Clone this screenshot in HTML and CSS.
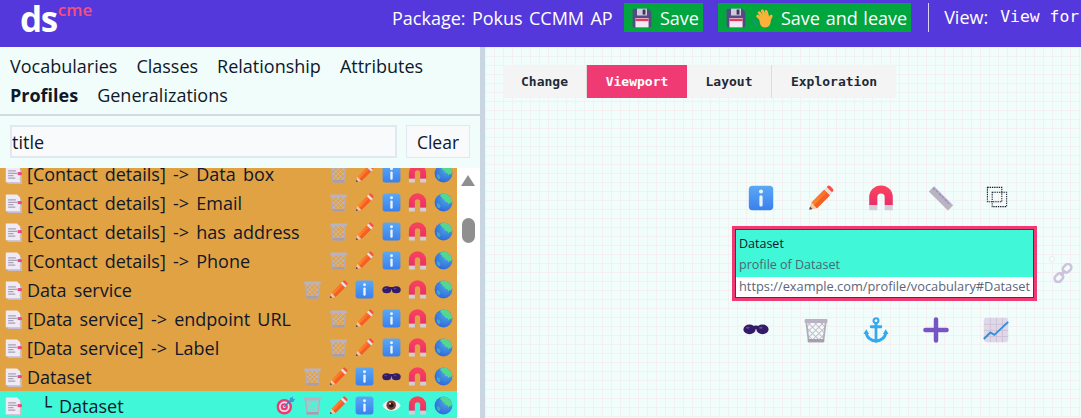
FILE: index.html
```html
<!DOCTYPE html>
<html lang="en">
<head>
<meta charset="utf-8">
<title>Dataspecer CME</title>
<link rel="stylesheet" href="styles.css">
</head>
<body>
<svg class="sprite" aria-hidden="true">
  <defs>
    <linearGradient id="gBlue" x1="0" y1="0" x2="0" y2="1"><stop offset="0" stop-color="#5aa8f5"/><stop offset="1" stop-color="#3a80ee"/></linearGradient>
    <linearGradient id="gMag" x1="0" y1="0" x2="0" y2="1"><stop offset="0" stop-color="#f8405f"/><stop offset="1" stop-color="#ea2f6c"/></linearGradient>
    <radialGradient id="gGlobe" cx=".65" cy=".3" r=".8"><stop offset="0" stop-color="#4aa8e8"/><stop offset="1" stop-color="#2f62d8"/></radialGradient>
    <linearGradient id="gPen" x1="0" y1="1" x2="1" y2="0"><stop offset="0" stop-color="#ff8a2a"/><stop offset="1" stop-color="#f96a2c"/></linearGradient>
    <pattern id="mesh" width="5.500" height="5.500" patternUnits="userSpaceOnUse" patternTransform="rotate(45)">
      <path d="M0 0h5.500M0 0v5.500" stroke="#c2bbca" stroke-width="2.400"/>
    </pattern>

    <symbol id="i-doc" viewBox="0 0 28 32">
      <path d="M4 4h18l6 6v22H4z" fill="#c4bcd2"/>
      <path d="M1 1h19l5 5v23H1z" fill="#efeaf5"/>
      <path d="M5 10h13M5 14h15M5 18h9M5 22h12" stroke="#a8a2b4" stroke-width="2.200"/>
      <rect x="21" y="12" width="7" height="5" fill="#f0447e"/>
      <rect x="24" y="22" width="4" height="3" fill="#f4c25a" opacity=".7"/>
    </symbol>

    <symbol id="i-trash" viewBox="0 0 32 32">
      <path d="M4 6l3 24h18l3-24z" fill="url(#mesh)"/>
      <path d="M4 6l3 24h18l3-24" fill="none" stroke="#b4acbc" stroke-width="2.200"/>
      <rect x="2" y="2.500" width="28" height="5" rx="1.400" fill="#b9b2c2"/>
      <rect x="6" y="27" width="20" height="4" rx="1" fill="#a69eb0"/>
    </symbol>

    <symbol id="i-pencil" viewBox="0 0 32 32">
      <path d="M1.500 30.500l2.500-9 7 7z" fill="#f2c9a0"/>
      <path d="M1.500 30.500l1-4 3 3z" fill="#533566"/>
      <path d="M4 21.500L20 5.500l7 7-16 16z" fill="url(#gPen)"/>
      <path d="M7.500 25L23.500 9l3.500 3.500-16 16z" fill="#f55f25"/>
      <path d="M20 5.500l3-3 7 7-3 3z" fill="#e4dfe8"/>
      <path d="M23 2.500l1-1c1-1 2.500-1 3.500 0l3 3c1 1 1 2.500 0 3.500l-1 1z" fill="#f8503c"/>
    </symbol>

    <symbol id="i-info" viewBox="0 0 32 32">
      <rect x="1" y="1" width="30" height="30" rx="4.500" fill="url(#gBlue)"/>
      <circle cx="16" cy="8" r="2.500" fill="#eaf3ff"/>
      <rect x="14" y="12.500" width="4" height="14" rx="2" fill="#eaf3ff"/>
    </symbol>

    <symbol id="i-magnet" viewBox="0 0 32 32">
      <path d="M6.500 25V15a9.500 9.500 0 0 1 19 0v10" fill="none" stroke="url(#gMag)" stroke-width="10"/>
      <path d="M1.500 25h10v6h-10zM20.500 25h10v6h-10z" fill="#d3cdd9"/>
    </symbol>

    <symbol id="i-globe" viewBox="0 0 32 32">
      <circle cx="16" cy="16" r="15" fill="url(#gGlobe)"/>
      <path d="M11 2.500c3-1.500 9-1.500 12 .5 4 2.500 6.500 5.500 7.500 9.500l-1.500 5-3-1-1.500 3-2-4-4-1-1-3.500-3-.5-1-3-3-2z" fill="#52d890"/>
      <path d="M5 17l4 1.500 2 3-1 3.500-2.500 .5C5 23 4 20 5 17z" fill="#3fa8c8"/>
    </symbol>

    <symbol id="i-glasses" viewBox="0 0 32 32">
      <path d="M12 12.500c2.500-1 5.500-1 8 0v3.500h-8z" fill="#321b67"/>
      <ellipse cx="8" cy="16.500" rx="7.500" ry="6" fill="#321b67"/>
      <ellipse cx="24" cy="16.500" rx="7.500" ry="6" fill="#321b67"/>
      <ellipse cx="6" cy="14.500" rx="2.300" ry="1.200" fill="#6a4ba0"/>
      <ellipse cx="22" cy="14.500" rx="2.300" ry="1.200" fill="#6a4ba0"/>
    </symbol>

    <symbol id="i-eye" viewBox="0 0 32 32">
      <path d="M.500 16c6-12 25-12 31 0-6 12-25 12-31 0z" fill="#f4eef0"/>
      <circle cx="15.500" cy="15.500" r="8" fill="#7a3c30"/>
      <circle cx="15.500" cy="15.500" r="4" fill="#24131a"/>
      <circle cx="13.500" cy="13" r="1.500" fill="#fff"/>
    </symbol>

    <symbol id="i-target" viewBox="0 0 32 32">
      <circle cx="14" cy="18" r="13" fill="#ec3a72"/>
      <circle cx="14" cy="18" r="9" fill="#f6d7e2"/>
      <circle cx="14" cy="18" r="6" fill="#ec3a72"/>
      <circle cx="14" cy="18" r="2.400" fill="#f6d7e2"/>
      <path d="M14 18L27 5" stroke="#2f7fd8" stroke-width="2.200"/>
      <path d="M23 4l5-3 .5 3.500L32 5l-3 5-5 0z" fill="#3c97e8"/>
    </symbol>

    <symbol id="i-ruler" viewBox="0 0 32 32">
      <path d="M1 8l6.500-6.500L31 25l-6.500 6.500z" fill="#b9b4bf"/>
      <path d="M6 3.500l2.500 2.500M10 7l2 2M13.500 10.500l2.500 2.500M17 14l2 2M20.500 17.500l2.500 2.500M24 21l2 2" stroke="#9c83e0" stroke-width="1.500"/>
    </symbol>

    <symbol id="i-select" viewBox="0 0 32 32">
      <rect x="2" y="2" width="21" height="21" fill="none" stroke="#1a1a2a" stroke-width="1.500" stroke-dasharray="2 1.300"/>
      <rect x="9" y="9" width="21" height="21" fill="none" stroke="#1a1a2a" stroke-width="1.500" stroke-dasharray="2 1.300"/>
    </symbol>

    <symbol id="i-anchor" viewBox="0 0 32 32">
      <circle cx="16" cy="4.500" r="3" fill="none" stroke="#35a8ee" stroke-width="2.600"/>
      <path d="M16 8v22M10 12h12" stroke="#35a8ee" stroke-width="3.400" stroke-linecap="round"/>
      <path d="M4 18c0 7 5.500 11.500 12 11.500S28 25 28 18" fill="none" stroke="#35a8ee" stroke-width="3.600"/>
      <path d="M.500 21l3.500-6 3.500 6zM24.500 21l3.500-6 3.500 6z" fill="#35a8ee"/>
    </symbol>

    <symbol id="i-plus" viewBox="0 0 32 32">
      <path d="M16 3v26M3 16h26" stroke="#7654c4" stroke-width="5.500" stroke-linecap="round"/>
    </symbol>

    <symbol id="i-chart" viewBox="0 0 32 32">
      <rect x="1" y="1" width="30" height="30" rx="3" fill="#e0d8e8"/>
      <path d="M1 9h30M1 16.500h30M1 24h30M9 1v30M16.500 1v30M24 1v30" stroke="#c9bfd4" stroke-width="1"/>
      <path d="M1 27l8-8 5 3L31 6" fill="none" stroke="#2f8fe0" stroke-width="2.400"/>
    </symbol>

    <symbol id="i-link" viewBox="0 0 32 32">
      <g fill="none" stroke="#cdc3dc" stroke-width="4">
        <rect x="15" y="3" width="15" height="11" rx="5.500" transform="rotate(-45 22.500 8.500)"/>
        <rect x="2" y="18" width="15" height="11" rx="5.500" transform="rotate(-45 9.500 23.500)"/>
        <path d="M12 20l8-8"/>
      </g>
    </symbol>

    <symbol id="i-save" viewBox="0 0 32 32">
      <path d="M1 3.500C1 2 2 1 3.500 1H26l5 5v22.500c0 1.500-1 2.500-2.500 2.500h-25C2 31 1 30 1 28.500z" fill="#544a84"/>
      <rect x="8" y="1" width="16" height="11" fill="#d0cbdc"/>
      <rect x="17" y="2.500" width="4.500" height="8" fill="#3d3560"/>
      <rect x="5.500" y="16" width="21" height="15" fill="#efeaf4"/>
      <rect x="5.500" y="17" width="21" height="4" fill="#e5395f"/>
    </symbol>

    <symbol id="i-wave" viewBox="0 0 32 32">
      <g stroke="#fbb13a" stroke-width="4.600" stroke-linecap="round">
        <path d="M15 20L7.500 13M17 17L10 7.500M20 15L15 4.500M24 15L21 5.500M25 22l4-9"/>
      </g>
      <path d="M10 17l14-5 4 8c1 5-2 11-9 11-5 0-8-3-9-14z" fill="#fbb13a"/>
      <path d="M1.500 19c0 4 2 7 5 9" fill="none" stroke="#1e8f9e" stroke-width="1.800"/>
      <path d="M26 1c2 1 4 3 4.500 5" fill="none" stroke="#1e8f9e" stroke-width="1.500"/>
    </symbol>
  </defs>
</svg>

<header class="topbar">
  <div class="logo"><span class="logo-ds">ds</span><span class="logo-cme">cme</span></div>
  <div class="package">Package: Pokus CCMM AP</div>
  <button class="save"><svg class="save-icon"><use href="#i-save"/></svg><span>Save</span></button>
  <button class="save"><svg class="save-icon"><use href="#i-save"/></svg><svg class="save-icon"><use href="#i-wave"/></svg><span>Save and leave</span></button>
  <div class="view"><span>View:</span><span class="mono">View for</span></div>
</header>

<main class="main">
  <aside class="left">
    <nav class="tabs">
      <div class="tab-line"><span>Vocabularies</span><span>Classes</span><span>Relationship</span><span>Attributes</span></div>
      <div class="tab-line"><b>Profiles</b><span>Generalizations</span></div>
    </nav>
    <div class="search">
      <input class="search-input" value="title">
      <button class="clear">Clear</button>
    </div>
    <div class="list-wrap">
      <ul class="list">
        <li class="row"><svg class="ic-doc"><use href="#i-doc"/></svg><span class="name">[Contact details] -&gt; Data box</span><span class="acts"><svg class="ic"><use href="#i-trash"/></svg><svg class="ic"><use href="#i-pencil"/></svg><svg class="ic"><use href="#i-info"/></svg><svg class="ic"><use href="#i-magnet"/></svg><svg class="ic"><use href="#i-globe"/></svg></span></li>
        <li class="row"><svg class="ic-doc"><use href="#i-doc"/></svg><span class="name">[Contact details] -&gt; Email</span><span class="acts"><svg class="ic"><use href="#i-trash"/></svg><svg class="ic"><use href="#i-pencil"/></svg><svg class="ic"><use href="#i-info"/></svg><svg class="ic"><use href="#i-magnet"/></svg><svg class="ic"><use href="#i-globe"/></svg></span></li>
        <li class="row"><svg class="ic-doc"><use href="#i-doc"/></svg><span class="name">[Contact details] -&gt; has address</span><span class="acts"><svg class="ic"><use href="#i-trash"/></svg><svg class="ic"><use href="#i-pencil"/></svg><svg class="ic"><use href="#i-info"/></svg><svg class="ic"><use href="#i-magnet"/></svg><svg class="ic"><use href="#i-globe"/></svg></span></li>
        <li class="row"><svg class="ic-doc"><use href="#i-doc"/></svg><span class="name">[Contact details] -&gt; Phone</span><span class="acts"><svg class="ic"><use href="#i-trash"/></svg><svg class="ic"><use href="#i-pencil"/></svg><svg class="ic"><use href="#i-info"/></svg><svg class="ic"><use href="#i-magnet"/></svg><svg class="ic"><use href="#i-globe"/></svg></span></li>
        <li class="row"><svg class="ic-doc"><use href="#i-doc"/></svg><span class="name">Data service</span><span class="acts"><svg class="ic"><use href="#i-trash"/></svg><svg class="ic"><use href="#i-pencil"/></svg><svg class="ic"><use href="#i-info"/></svg><svg class="ic"><use href="#i-glasses"/></svg><svg class="ic"><use href="#i-magnet"/></svg><svg class="ic"><use href="#i-globe"/></svg></span></li>
        <li class="row"><svg class="ic-doc"><use href="#i-doc"/></svg><span class="name">[Data service] -&gt; endpoint URL</span><span class="acts"><svg class="ic"><use href="#i-trash"/></svg><svg class="ic"><use href="#i-pencil"/></svg><svg class="ic"><use href="#i-info"/></svg><svg class="ic"><use href="#i-magnet"/></svg><svg class="ic"><use href="#i-globe"/></svg></span></li>
        <li class="row"><svg class="ic-doc"><use href="#i-doc"/></svg><span class="name">[Data service] -&gt; Label</span><span class="acts"><svg class="ic"><use href="#i-trash"/></svg><svg class="ic"><use href="#i-pencil"/></svg><svg class="ic"><use href="#i-info"/></svg><svg class="ic"><use href="#i-magnet"/></svg><svg class="ic"><use href="#i-globe"/></svg></span></li>
        <li class="row"><svg class="ic-doc"><use href="#i-doc"/></svg><span class="name">Dataset</span><span class="acts"><svg class="ic"><use href="#i-trash"/></svg><svg class="ic"><use href="#i-pencil"/></svg><svg class="ic"><use href="#i-info"/></svg><svg class="ic"><use href="#i-glasses"/></svg><svg class="ic"><use href="#i-magnet"/></svg><svg class="ic"><use href="#i-globe"/></svg></span></li>
        <li class="row row-active"><svg class="ic-doc"><use href="#i-doc"/></svg><span class="name name-child">└ Dataset</span><span class="acts"><svg class="ic"><use href="#i-target"/></svg><svg class="ic"><use href="#i-trash"/></svg><svg class="ic"><use href="#i-pencil"/></svg><svg class="ic"><use href="#i-info"/></svg><svg class="ic"><use href="#i-eye"/></svg><svg class="ic"><use href="#i-magnet"/></svg><svg class="ic"><use href="#i-globe"/></svg></span></li>
      </ul>
      <div class="scrollbar">
        <div class="sb-up"></div>
        <div class="sb-thumb"></div>
      </div>
    </div>
  </aside>

  <section class="canvas">
    <div class="toolbar">
      <button class="tool">Change</button>
      <button class="tool tool-on">Viewport</button>
      <button class="tool">Layout</button>
      <button class="tool">Exploration</button>
    </div>

    <svg class="node-ic top1"><use href="#i-info"/></svg>
    <svg class="node-ic top2"><use href="#i-pencil"/></svg>
    <svg class="node-ic top3"><use href="#i-magnet"/></svg>
    <svg class="node-ic top4"><use href="#i-ruler"/></svg>
    <svg class="node-ic top5"><use href="#i-select"/></svg>

    <div class="node">
      <div class="node-inner">
        <div class="node-head">
          <div class="node-title">Dataset</div>
          <div class="node-sub">profile of Dataset</div>
        </div>
        <div class="node-iri">https://example.com/profile/vocabulary#Dataset</div>
      </div>
    </div>

    <div class="handle"></div>
    <svg class="node-ic link"><use href="#i-link"/></svg>

    <svg class="node-ic bot1"><use href="#i-glasses"/></svg>
    <svg class="node-ic bot2"><use href="#i-trash"/></svg>
    <svg class="node-ic bot3"><use href="#i-anchor"/></svg>
    <svg class="node-ic bot4"><use href="#i-plus"/></svg>
    <svg class="node-ic bot5"><use href="#i-chart"/></svg>
  </section>
</main>
</body>
</html>
```

FILE: styles.css
```css
* { box-sizing: border-box; }
html, body { margin: 0; padding: 0; }
body {
  width: 1081px;
  height: 418px;
  overflow: hidden;
  font-family: "Open Sans", "DejaVu Sans", sans-serif;
  color: #0f172a;
  background: #f0fdfa;
}
.sprite { position: absolute; width: 0; height: 0; }

.topbar {
  height: 47px;
  background: #5438dc;
  display: flex;
  align-items: flex-start;
  color: #fff;
  white-space: nowrap;
}
.logo { width: 392px; padding-left: 20px; display: flex; align-items: flex-start; flex: none; }
.logo-ds { font-size: 35px; line-height: 38px; font-weight: 700; letter-spacing: -1.400px; }
.logo-cme { font-size: 17px; line-height: 20px; font-weight: 600; color: #f4507c; margin-left: 1px; }
.package { font-size: 18px; line-height: 24px; margin-top: 6px; width: 232px; flex: none; word-spacing: 1.700px; }
.save {
  flex: none;
  height: 29px;
  margin-top: 3px;
  margin-right: 15px;
  padding: 0 4px 0 8px;
  border: 0;
  background: #02a63f;
  color: #fff;
  font: inherit;
  font-size: 18px;
  display: flex;
  align-items: center;
  gap: 7px;
  word-spacing: 1px;
}
.save span { margin-left: 1px; }
.save-icon { width: 20px; height: 20px; flex: none; }
.view {
  flex: none;
  margin-top: 3px;
  margin-left: 2px;
  padding-left: 15px;
  height: 29px;
  border-left: 1px solid #d8d4f4;
  font-size: 18px;
  line-height: 28px;
  display: flex;
  gap: 12px;
}
.mono { font-family: "DejaVu Sans Mono", monospace; font-size: 16.400px; }

.main { display: flex; height: 371px; }
.left {
  width: 485px;
  flex: none;
  border-right: 5px solid #c9d6e2;
  background: #f0fdfa;
  display: flex;
  flex-direction: column;
}
.tabs {
  height: 69px;
  padding: 5px 10px 0;
  border-bottom: 2px solid #d4dbe0;
  font-size: 18px;
  line-height: 29px;
}
.tab-line { display: flex; gap: 19px; white-space: nowrap; }
.tab-line b { font-weight: 700; }
.search { height: 52px; padding: 9px 10px 0; display: flex; gap: 9px; align-items: flex-start; }
.search-input {
  width: 387px;
  height: 33px;
  border: 2px solid #e2e8f0;
  background: #f8fafc;
  color: #0f172a;
  font: inherit;
  font-size: 18px;
  padding: 0;
  outline: none;
}
.clear {
  width: 64px;
  height: 33px;
  border: 1px solid #e2e8f0;
  background: #f8fafc;
  color: #0f172a;
  font: inherit;
  font-size: 17.500px;
  padding: 0;
}
.list-wrap { flex: 1; display: flex; overflow: hidden; min-height: 0; }
.list { list-style: none; margin: -9px 0 0; padding: 0; width: 457px; flex: none; }
.row {
  height: 29px;
  background: #e0a243;
  display: flex;
  align-items: center;
  padding-left: 5px;
}
.row-active { background: #40f8d8; }
.ic-doc { width: 17px; height: 19px; flex: none; margin-top: 1px; }
.name { margin-left: 5px; font-size: 18px; line-height: 29px; margin-top: 1px; white-space: nowrap; word-spacing: 2.500px; }
.name-child { margin-left: 19px; }
.acts { margin-left: auto; display: flex; }
.ic { width: 19px; height: 19px; margin: 0 3.660px; flex: none; }
.scrollbar { width: 23px; background: #fff; flex: none; position: relative; }
.sb-up {
  position: absolute;
  left: 4px;
  top: 7px;
  width: 0;
  height: 0;
  border-left: 7.500px solid transparent;
  border-right: 7.500px solid transparent;
  border-bottom: 11px solid #8f8f8f;
}
.sb-thumb {
  position: absolute;
  left: 5px;
  top: 50px;
  width: 13px;
  height: 25px;
  border-radius: 7px;
  background: #8f8f8f;
}

.canvas {
  flex: 1;
  position: relative;
  overflow: hidden;
  background-color: #f0fdfa;
  background-image:
    linear-gradient(#f4eff1 1.500px, transparent 1.500px),
    linear-gradient(90deg, #f4eff1 1.500px, transparent 1.500px);
  background-size: 9px 9px;
}
.toolbar {
  position: absolute;
  left: 18px;
  top: 18px;
  display: flex;
  height: 33px;
  background: #f4f4f4;
}
.tool {
  height: 33px;
  border: 0;
  border-right: 1px solid #dcdcdc;
  background: #f4f4f4;
  color: #1f2937;
  font-family: "DejaVu Sans Mono", monospace;
  font-size: 13px;
  font-weight: 700;
  padding: 0;
}
.tool:nth-child(1) { width: 84px; }
.tool:nth-child(2) { width: 100px; }
.tool:nth-child(3) { width: 85px; }
.tool:nth-child(4) { width: 124px; border-right: 0; }
.tool-on { background: #ef3a74; color: #fff; border-right: 0; }

.node-ic { position: absolute; width: 26px; height: 26px; }
.top1 { left: 263px; top: 138px; }
.top2 { left: 323px; top: 138px; }
.top3 { left: 383px; top: 138px; }
.top4 { left: 443px; top: 138px; }
.top5 { left: 501px; top: 139px; width: 22px; height: 22px; }
.bot1 { left: 258px; top: 269px; }
.bot2 { left: 318px; top: 270px; }
.bot3 { left: 378px; top: 270px; }
.bot4 { left: 438px; top: 270px; }
.bot5 { left: 498px; top: 270px; }
.link { left: 568px; top: 216px; width: 20px; height: 20px; }
.handle {
  position: absolute;
  left: 564px;
  top: 209px;
  width: 6px;
  height: 6px;
  border-radius: 50%;
  border: 1px solid #e6ece9;
  background: #fff;
}
.node {
  position: absolute;
  left: 247px;
  top: 179px;
  width: 305px;
  height: 75px;
  border: 3px solid #ef3a74;
}
.node-inner { height: 100%; border: 1px solid #3a3a55; display: flex; flex-direction: column; background: #fff; }
.node-head { background: #40f8d8; height: 47px; padding: 3px 3px 0; font-size: 12.500px; line-height: 21px; }
.node-title { color: #0f172a; }
.node-sub { color: #4d6674; }
.node-iri { padding: 0 3px; font-size: 12.800px; line-height: 19px; color: #5c6478; white-space: nowrap; }
```
